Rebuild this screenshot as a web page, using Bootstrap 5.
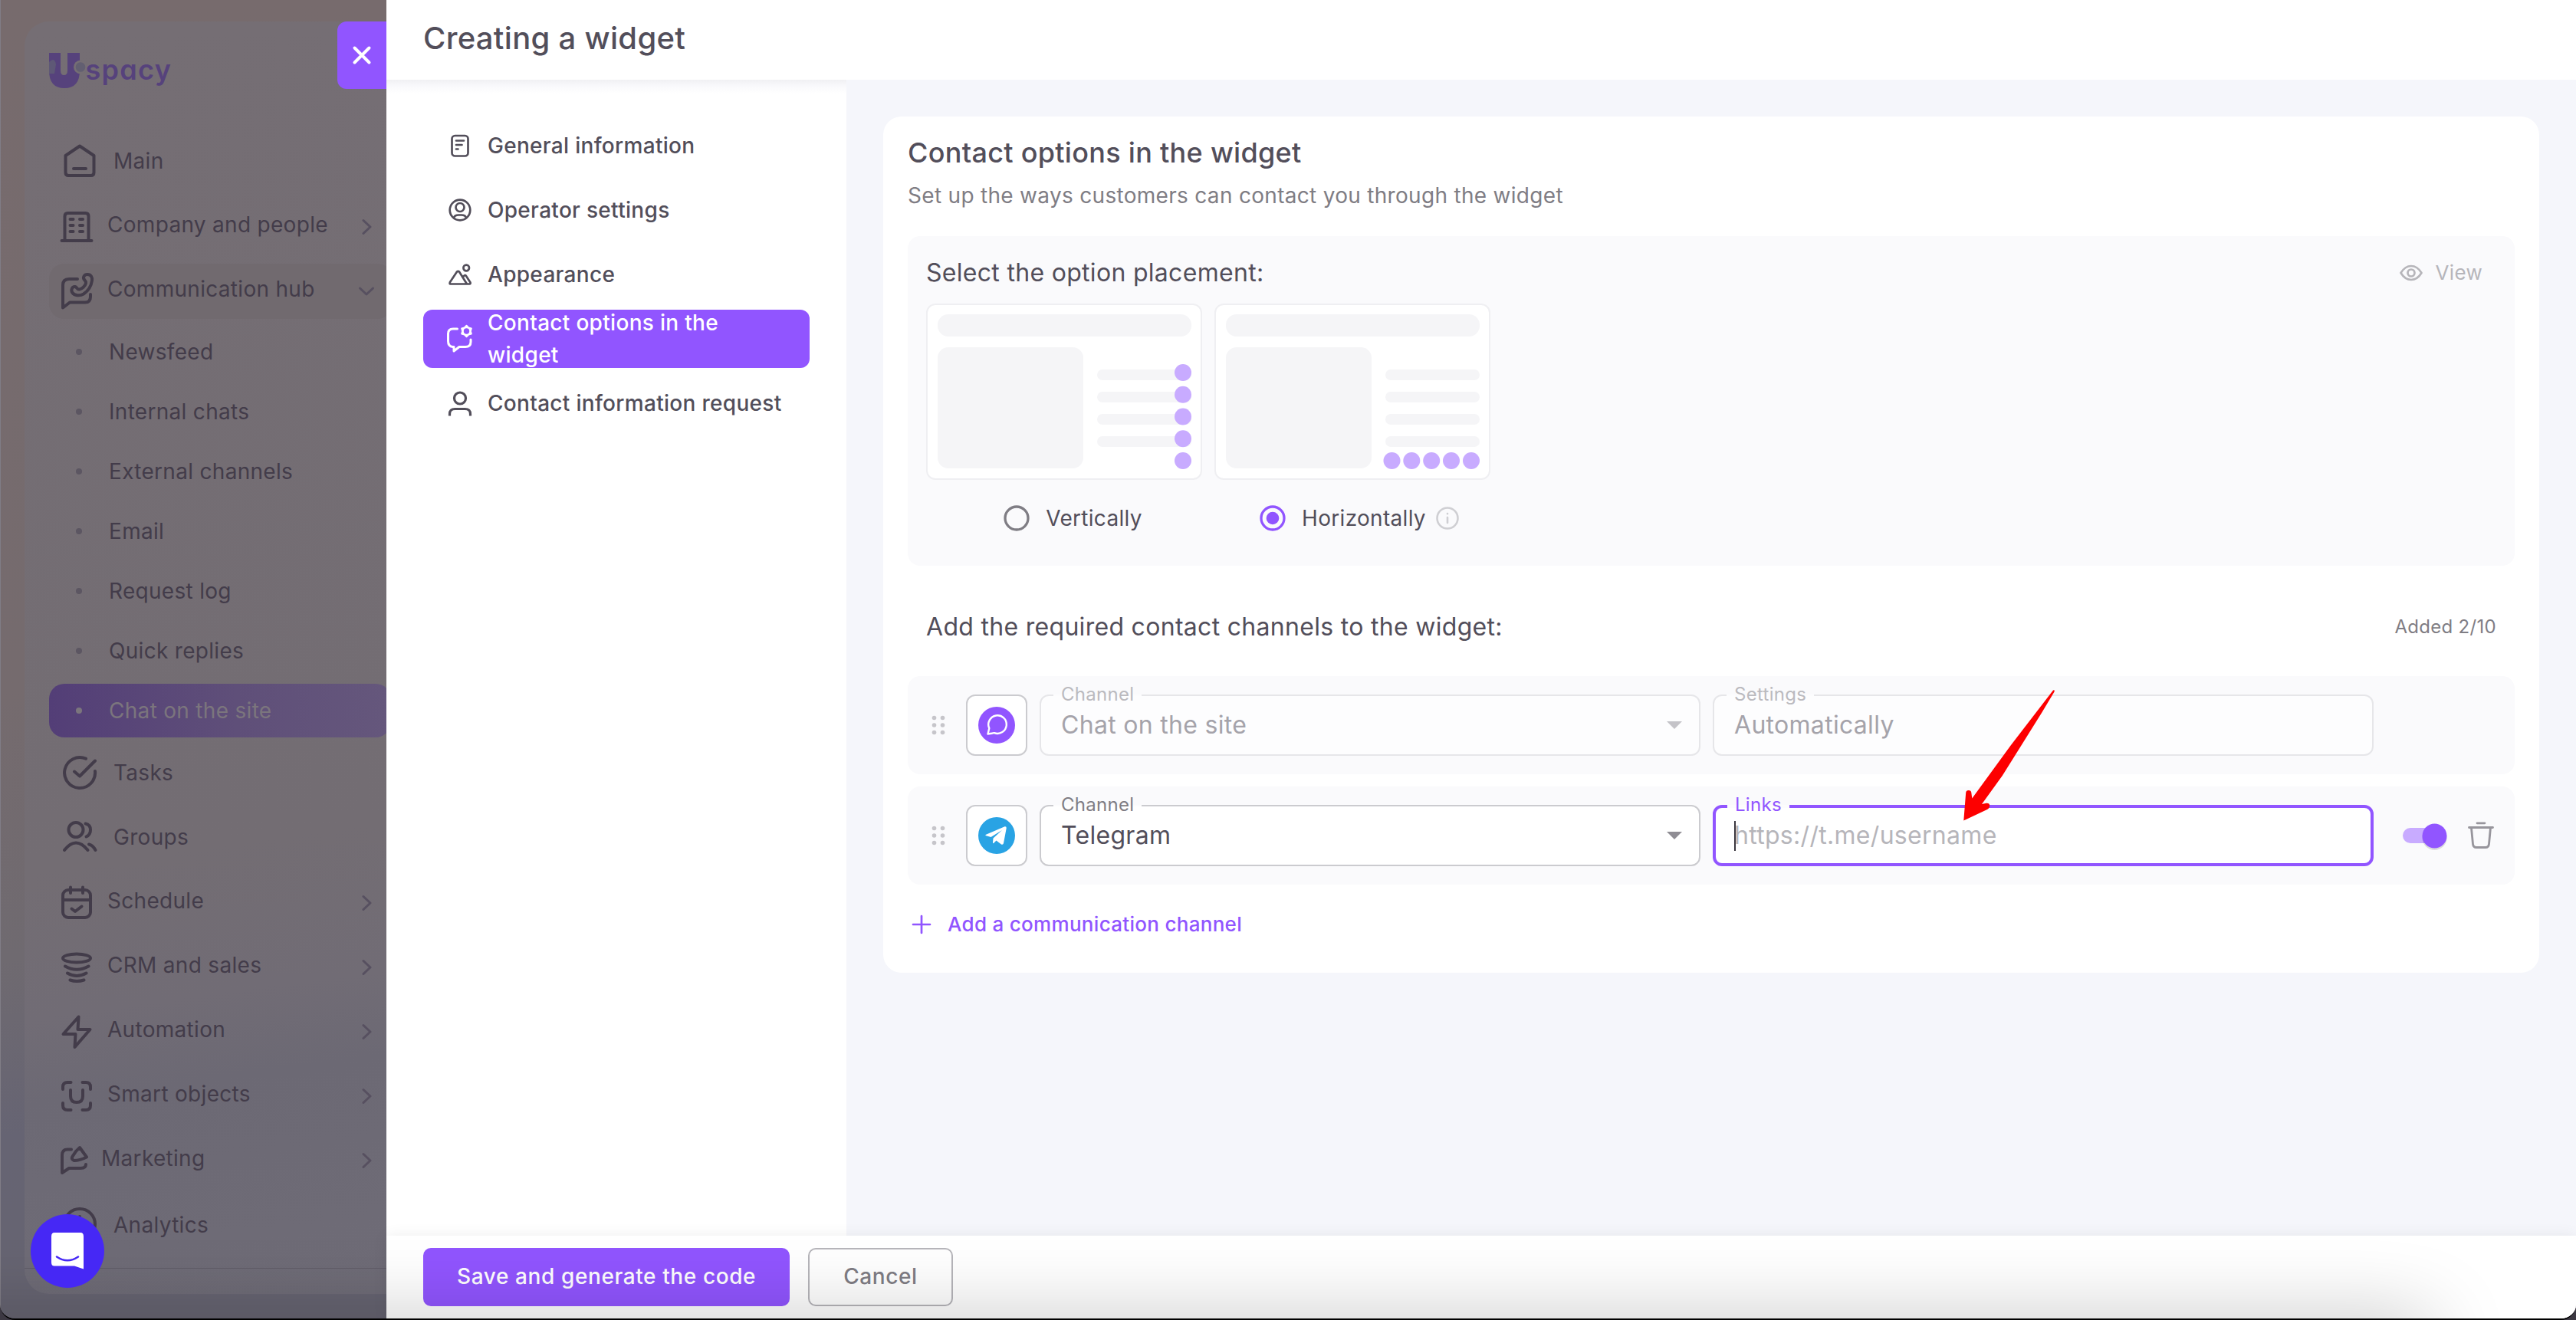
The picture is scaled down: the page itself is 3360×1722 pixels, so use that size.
<!DOCTYPE html>
<html lang="en">
<head>
  <meta charset="UTF-8" />
  <meta name="viewport" content="width=device-width, initial-scale=1" />
  <title>Creating a widget</title>
  <!-- Bootstrap CSS -->
  <link href="https://cdn.jsdelivr.net/npm/bootstrap@5.3.0/dist/css/bootstrap.min.css" rel="stylesheet" />
  <style>
    :root {
      --violet: #9155ff;
      --violet-soft: #c8abff;
      --ink: #524e5a;
      --ink-soft: #7f7d84;
      --ink-pale: #b6b5ba;
    }
    body {
      font-family: Inter, "Liberation Sans", sans-serif;
      font-size: 28px;
      line-height: 42px;
      letter-spacing: 0.3px;
      color: var(--ink);
      background: #3c3842;
    }
    svg { flex-shrink: 0; display: block; }
    .ico { fill: none; stroke: currentColor; stroke-width: 4; stroke-linecap: round; stroke-linejoin: round; }
    .ico-sm { stroke-width: 2.7; }
    .app {
      width: 3360px;
      height: 1722px;
      border-bottom: 2px solid #000;
      border-radius: 0 0 20px 20px;
    }

    /* Dimmed sidebar */
    .side {
      width: 504px;
      padding: 28px 0 32px 31px;
      border-left: 1px solid #807d86;
      background: linear-gradient(180deg, #776b6d 0, #756b6e 900px, #6f6a70 1250px, #666473 1480px, #666471 100%);
      color: #433c4a;
    }
    .side-panel {
      border-radius: 32px 0 0 32px;
      background: linear-gradient(172deg, #756e74 0, #736d73 1100px, #716c75 1290px, #6c6974 1400px, #6f6c77 100%);
    }
    .brand { height: 140px; padding: 36px 0 0 31px; }
    .side-item { height: 84px; padding-left: 48px; gap: 20px; }
    .side-item.has-sub { padding: 0 16px 0 44px; gap: 16px; }
    .side-item.has-sub svg { margin-top: 4px; }
    .side-item.has-sub span { margin-bottom: 2px; }
    .side-item.open { height: 72px; margin: 8px -8px 4px 32px; padding: 0 22px 0 12px; border-radius: 20px; background: #716a6f; }
    .side-item.open svg { margin-top: 0; }
    .side-item.open span { margin-bottom: 6px; }
    .arrow { color: #575060; }
    .sub-item { height: 78px; padding-left: 67px; gap: 35px; }
    .sub-item::before { content: ""; width: 8px; height: 8px; border-radius: 50%; background: #5c5662; }
    .sub-item.current {
      height: 70px;
      margin: 4px -6px 4px 32px;
      padding-left: 35px;
      border-radius: 20px;
      background: linear-gradient(90deg, #533e77, #5f4f79 55%, #65577c);
      color: #7b757d;
    }
    .sub-item.current::before { background: #7b757d; }
    .side-end { height: 50px; border-bottom: 1px solid #5f5b67; margin-bottom: 33px; margin-top: -33px; }
    .close-tab { left: 440px; top: 28px; width: 64px; height: 88px; border-radius: 12px 0 0 12px; background: var(--violet); }
    .messenger { left: 40px; top: 1584px; width: 96px; height: 96px; background: #4628f5; z-index: 5; }

    /* Drawer */
    .drawer-head { height: 104px; padding: 0 48px 4px; font-size: 40px; }
    .steps { width: 600px; padding: 48px; gap: 8px; background: linear-gradient(180deg, #f0f0f3 0, #f8f8fb 7px, #fff 18px); }
    .step { height: 76px; padding: 0 30px; gap: 18px; border-radius: 12px; }
    .step.active { background: var(--violet); color: #fff; }
    .work { padding: 48px; background: #f5f6fb; }
    .sheet { height: 1117px; border-radius: 24px; padding: 23px 32px 0; }
    .sheet-title { font-size: 36px; line-height: 48px; }
    .sheet-note { line-height: 40px; margin-top: 12px; color: var(--ink-soft); }
    .placement { height: 430px; margin-top: 33px; padding: 27px 24px 0; border-radius: 16px; background: #fafafc; }
    .label-lg { font-size: 32px; line-height: 40px; }
    .view-btn { font-size: 26px; margin-right: 18px; color: var(--ink-pale); }
    .previews { margin-top: 19px; }
    .preview { width: 360px; height: 230px; border: 2px solid #efeff2; border-radius: 12px; }
    .choice { margin-top: 29px; padding-left: 20px; gap: 18px; }
    .channels-head { height: 64px; margin: 48px 24px 32px; }
    .added { font-size: 24px; color: var(--ink-soft); }
    .channel { height: 128px; padding-right: 24px; gap: 16px; border-radius: 16px; background: #fafafc; }
    .channel + .channel { margin-top: 16px; }
    .logo-box { width: 80px; height: 80px; border: 2px solid #cbcbcf; border-radius: 12px; }
    .field { width: 862px; height: 80px; padding: 0 22px 0 26px; border: 2px solid #cbcbcf; border-radius: 12px; font-size: 32px; }
    .field-label {
      position: absolute;
      left: 16px;
      top: -2px;
      height: 2px;
      padding: 0 10px;
      font-size: 24px;
      line-height: 0;
      color: var(--ink-soft);
      background: #fcfcfd;
    }
    .field.off { border-color: #e6e6e9; background: #fdfdfe; color: #a5a3aa; }
    .field.off .field-label { color: #bbbabf; }
    .field.on { border: 4px solid var(--violet); padding: 0 24px; color: var(--ink-pale); }
    .field.on .field-label { left: 15px; top: -4px; height: 4px; color: var(--violet); }
    .caret { position: absolute; left: 24px; top: 17px; width: 2px; height: 39px; background: #3a3740; }
    .switch { width: 60px; height: 40px; margin-left: 20px; }
    .trash { margin-left: 8px; color: #97959c; }
    .add-channel { height: 103px; gap: 16px; font-size: 26px; color: var(--violet); }
    .pointer { left: 2555px; top: 894px; }
    .drawer-foot { height: 108px; padding: 16px 48px; gap: 24px; background: #fff; box-shadow: 0 0 18px rgba(0, 0, 0, 0.07); z-index: 1; }
    .action { height: 76px; border: 2px solid var(--violet); border-radius: 10px; padding: 14px 42px 16px; font-size: 28px; line-height: 42px; letter-spacing: 0.6px; font-weight: 500; }
    .action.save { background: var(--violet); color: #fff; }
    .action.cancel { border-color: #b6b5ba; padding: 14px 44px 16px; color: var(--ink-soft); }
    .bottom-shade { left: -100px; top: 1722px; width: 3272px; height: 60px; border-radius: 20px; box-shadow: 0 0 100px rgba(0, 0, 0, 0.27); z-index: 3; }
  </style>
</head>
<body class="overflow-hidden">

<div class="app position-relative d-flex overflow-hidden">

  <!-- Sidebar -->
  <aside class="side flex-shrink-0">
    <div class="side-panel h-100 overflow-hidden">
      <div class="brand">
        <svg width="170" height="60" viewBox="0 0 170 60">
          <path d="M1 5H16V28Q16 34 20.500 34Q25 34 25 28V5H41V28Q41 51 21 51Q1 51 1 28Z" fill="#56427c"/>
          <path d="M1 17Q8 10 10 20L8 32H1Z" fill="#5e5876"/>
          <circle cx="42" cy="23.500" r="9" fill="#756e74"/>
          <circle cx="42" cy="23.500" r="6.300" fill="#625f71"/>
          <text x="48.500" y="39.500" font-size="36" font-weight="600" letter-spacing="1.300" fill="#56427c" style="font-feature-settings: 'cv11'">spacy</text>
        </svg>
      </div>
      <div class="side-item d-flex align-items-center">
        <svg class="ico" width="48" height="48"><path d="M24 4.500L42.500 17V39q0 4-4 4h-29q-4 0-4-4V17ZM16 34H32"/></svg>
        <span>Main</span>
      </div>
      <div class="side-item has-sub d-flex align-items-center">
        <svg class="ico" width="48" height="48"><path d="M8.500 42V10q0-4 4-4h23q4 0 4 4V42M4.500 42h39M15.500 14h4M28 14h4M15.500 22h4M28 22h4M15.500 30h4M28 30h4"/></svg>
        <span class="flex-grow-1">Company and people</span>
        <svg class="ico arrow" width="16" height="24"><path stroke-width="3" d="M2 3.500L11 12L2 20.500"/></svg>
      </div>
      <div class="side-item has-sub open d-flex align-items-center">
        <svg class="ico" width="48" height="48"><path d="M25 8H14Q6 8 6 16V45.500L15 38.500H35Q42 38.500 42 31V28M34.500 9.500C31 6 34 2 38 2C43 2 44.500 6 44 10C43 17 39 23.500 33 27.500C28 30.500 21 29.500 18.500 26C16 22.500 18 17.500 22 18C24.500 18.500 24 22 27.500 21.500C31 21 35 17.500 36 13.500C36.300 11.500 35.800 10.800 34.500 9.500Z"/></svg>
        <span class="flex-grow-1">Communication hub</span>
        <svg class="ico arrow" width="24" height="16"><path stroke-width="3" d="M3.500 4L12 12L20.500 4"/></svg>
      </div>
      <div class="sub-item d-flex align-items-center">Newsfeed</div>
      <div class="sub-item d-flex align-items-center">Internal chats</div>
      <div class="sub-item d-flex align-items-center">External channels</div>
      <div class="sub-item d-flex align-items-center">Email</div>
      <div class="sub-item d-flex align-items-center">Request log</div>
      <div class="sub-item d-flex align-items-center">Quick replies</div>
      <div class="sub-item current d-flex align-items-center">Chat on the site</div>
      <div class="side-item d-flex align-items-center">
        <svg class="ico" width="48" height="48"><path d="M32 5.700A20 20 0 1 0 44 22M17 22.500L24 28.500L44 8.500"/></svg>
        <span>Tasks</span>
      </div>
      <div class="side-item d-flex align-items-center">
        <svg class="ico" width="48" height="48"><circle cx="19" cy="14.500" r="9.500"/><path d="M4 41Q19 22 34.500 41M31.500 6.500Q38 8 38 14.500T32.500 23.500M36 33.500Q41 34.500 44.500 41"/></svg>
        <span>Groups</span>
      </div>
      <div class="side-item has-sub d-flex align-items-center">
        <svg class="ico" width="48" height="48"><rect x="6" y="7" width="36" height="36" rx="7"/><path d="M16 3.500V11M32 3.500V11M6 20H42M17.500 31.500L22 35L30.500 28.500"/></svg>
        <span class="flex-grow-1">Schedule</span>
        <svg class="ico arrow" width="16" height="24"><path stroke-width="3" d="M2 3.500L11 12L2 20.500"/></svg>
      </div>
      <div class="side-item has-sub d-flex align-items-center">
        <svg class="ico" width="48" height="48"><ellipse cx="24" cy="12" rx="18" ry="5.500"/><path d="M9 22.500Q24 31 39.500 22.500M12 31.500Q24 38.500 36.500 31.500M15.500 40.500Q24 43.500 33.500 40.500"/></svg>
        <span class="flex-grow-1">CRM and sales</span>
        <svg class="ico arrow" width="16" height="24"><path stroke-width="3" d="M2 3.500L11 12L2 20.500"/></svg>
      </div>
      <div class="side-item has-sub d-flex align-items-center">
        <svg class="ico" width="48" height="48"><path d="M26.500 4.500L6.500 27H22.500L21.500 44L41.500 21H25.500Z"/></svg>
        <span class="flex-grow-1">Automation</span>
        <svg class="ico arrow" width="16" height="24"><path stroke-width="3" d="M2 3.500L11 12L2 20.500"/></svg>
      </div>
      <div class="side-item has-sub d-flex align-items-center">
        <svg class="ico" width="48" height="48"><path d="M6 15V12Q6 6 12 6H16.500M31.500 6H36Q42 6 42 12V15M42 33V36Q42 42 36 42H31.500M16.500 42H12Q6 42 6 36V33M16 16V24Q16 32 24 32T32 24V16"/></svg>
        <span class="flex-grow-1">Smart objects</span>
        <svg class="ico arrow" width="16" height="24"><path stroke-width="3" d="M2 3.500L11 12L2 20.500"/></svg>
      </div>
      <div class="side-item has-sub d-flex align-items-center">
        <svg class="ico" width="40" height="48"><path d="M17 9.500H12Q5 9.500 5 17V40L14 34H29Q36 34 36 29M28 7L37 19.500Q28 24 20.500 24Q16 22 19 18Q23 11 28 7Z"/></svg>
        <span class="flex-grow-1">Marketing</span>
        <svg class="ico arrow" width="16" height="24"><path stroke-width="3" d="M2 3.500L11 12L2 20.500"/></svg>
      </div>
      <div class="side-item d-flex align-items-center">
        <svg class="ico" width="48" height="48"><circle cx="24" cy="25" r="20"/><path d="M24 15V25"/></svg>
        <span class="mt-1">Analytics</span>
      </div>
      <div class="side-end"></div>
    </div>
  </aside>

  <!-- Drawer -->
  <section class="d-flex flex-column flex-grow-1 bg-white">
    <header class="drawer-head d-flex align-items-center fw-medium">Creating a widget</header>

    <div class="d-flex flex-grow-1">
      <nav class="steps d-flex flex-column flex-shrink-0 fw-medium">
        <div class="step d-flex align-items-center">
          <svg class="ico ico-sm" width="36" height="36"><rect x="7.500" y="5" width="21" height="26.500" rx="4"/><path d="M13 11.500h10M13 17h7.500M13 22.500h2.500"/></svg>
          <span>General information</span>
        </div>
        <div class="step d-flex align-items-center">
          <svg class="ico ico-sm" width="36" height="36"><circle cx="18" cy="18" r="13.300"/><circle cx="18" cy="14.500" r="5.500"/><path d="M10 28Q11 24.500 16 24.500H20Q25 24.500 26 28"/></svg>
          <span>Operator settings</span>
        </div>
        <div class="step d-flex align-items-center">
          <svg class="ico ico-sm" width="36" height="36"><circle cx="26.200" cy="9.500" r="3.800"/><path d="M5.500 30.500Q4 30.500 5 28L14 14.500Q15.500 13 17 14.500L27 30.500ZM21.500 22L23.500 19.500Q25 18.500 26 20L31.500 28.500Q32 30.500 30.500 30.500H26"/></svg>
          <span>Appearance</span>
        </div>
        <div class="step active d-flex align-items-center">
          <svg class="ico ico-sm overflow-visible" width="36" height="36"><path stroke-width="3" d="M14.500 5H9Q2.500 5 2.500 11.500V21Q2.500 28 8.500 28.500H10V34L17 28.500H25Q32 28.500 32 22V19"/><path stroke-width="2" fill="#fff" d="M26.500 .8L29.200 3.400L32.800 4.400L31.800 8L32.800 11.600L29.200 12.600L26.500 15.200L23.800 12.600L20.200 11.600L21.200 8L20.200 4.400L23.800 3.400Z"/><circle cx="26.500" cy="8" r="3.700" fill="#9155ff" stroke="none"/></svg>
          <span>Contact options in the widget</span>
        </div>
        <div class="step d-flex align-items-center">
          <svg class="ico" width="36" height="36"><g stroke-width="3.200" stroke-linecap="butt"><circle cx="18" cy="11.500" r="7.500"/><path d="M4.500 34.500V32Q4.500 25.500 11.500 25.500H24.500Q31.500 25.500 31.500 32V34.500"/></g></svg>
          <span class="text-nowrap">Contact information request</span>
        </div>
      </nav>

      <main class="work flex-grow-1">
        <div class="sheet bg-white">
          <div class="sheet-title fw-medium">Contact options in the widget</div>
          <div class="sheet-note">Set up the ways customers can contact you through the widget</div>

          <div class="placement">
            <div class="d-flex justify-content-between align-items-center">
              <div class="label-lg">Select the option placement:</div>
              <div class="view-btn d-flex align-items-center gap-3">
                <svg class="ico" width="32" height="32"><g stroke-width="2.700"><path d="M2.500 16Q8 7 16 7T29.500 16Q24 25 16 25T2.500 16Z"/><circle cx="16" cy="16" r="4.500"/></g></svg>
                <span>View</span>
              </div>
            </div>
            <div class="previews d-flex gap-3">
              <div>
                <div class="preview bg-white">
                  <svg width="356" height="226">
                    <g fill="#f5f5f7"><rect x="13" y="12" width="331" height="29" rx="14"/><rect x="13" y="55" width="190" height="158" rx="14"/><rect x="221" y="84" width="123" height="14" rx="7"/><rect x="221" y="113" width="123" height="14" rx="7"/><rect x="221" y="142" width="123" height="14" rx="7"/><rect x="221" y="171" width="123" height="14" rx="7"/></g>
                    <g fill="#c8abff"><circle cx="333" cy="88" r="11"/><circle cx="333" cy="116.700" r="11"/><circle cx="333" cy="145.500" r="11"/><circle cx="333" cy="174.200" r="11"/><circle cx="333" cy="203" r="11"/></g>
                  </svg>
                </div>
                <div class="choice d-flex align-items-center justify-content-center">
                  <svg width="40" height="42"><circle cx="20" cy="21" r="15" fill="none" stroke="#7f7d84" stroke-width="3.300"/></svg>
                  <span>Vertically</span>
                </div>
              </div>
              <div>
                <div class="preview bg-white">
                  <svg width="356" height="226">
                    <g fill="#f5f5f7"><rect x="13" y="12" width="331" height="29" rx="14"/><rect x="13" y="55" width="190" height="158" rx="14"/><rect x="221" y="84" width="123" height="14" rx="7"/><rect x="221" y="113" width="123" height="14" rx="7"/><rect x="221" y="142" width="123" height="14" rx="7"/><rect x="221" y="171" width="123" height="14" rx="7"/></g>
                    <g fill="#c8abff"><circle cx="229.500" cy="203" r="11"/><circle cx="255.300" cy="203" r="11"/><circle cx="281.200" cy="203" r="11"/><circle cx="307" cy="203" r="11"/><circle cx="333" cy="203" r="11"/></g>
                  </svg>
                </div>
                <div class="choice d-flex align-items-center justify-content-center">
                  <svg width="40" height="42"><circle cx="20" cy="21" r="15" fill="none" stroke="#9155ff" stroke-width="3.300"/><circle cx="20" cy="21" r="8.300" fill="#9155ff"/></svg>
                  <span class="d-flex align-items-center gap-2">
                    Horizontally
                    <svg class="ico" width="40" height="42"><g stroke="#cfcfd3" stroke-width="2.600"><circle cx="20" cy="21" r="13.500"/><path d="M20 20V27M20 15V15.200"/></g></svg>
                  </span>
                </div>
              </div>
            </div>
          </div>

          <div class="channels-head d-flex justify-content-between align-items-center">
            <div class="label-lg">Add the required contact channels to the widget:</div>
            <div class="added">Added 2/10</div>
          </div>

          <div class="channel d-flex align-items-center">
            <svg width="60" height="32" fill="#c6c5ca"><circle cx="34.500" cy="6.500" r="2.800"/><circle cx="45.500" cy="6.500" r="2.800"/><circle cx="34.500" cy="16" r="2.800"/><circle cx="45.500" cy="16" r="2.800"/><circle cx="34.500" cy="25.500" r="2.800"/><circle cx="45.500" cy="25.500" r="2.800"/></svg>
            <div class="logo-box bg-white d-flex align-items-center justify-content-center">
              <svg width="48" height="48"><circle cx="24" cy="24" r="24" fill="#9155ff"/><path d="M12.500 35.500L14.300 28A11.800 11.800 0 1 1 21 34.200Q19.500 34 17.500 34.800Z" fill="none" stroke="#fff" stroke-width="2.400" stroke-linejoin="round"/></svg>
            </div>
            <div class="field off position-relative d-flex align-items-center justify-content-between">
              <span class="field-label">Channel</span>
              <span>Chat on the site</span>
              <svg width="20" height="10"><path d="M0 0H20L10 10Z" fill="#c4c3c8"/></svg>
            </div>
            <div class="field off position-relative d-flex align-items-center">
              <span class="field-label">Settings</span>
              <span>Automatically</span>
            </div>
          </div>

          <div class="channel d-flex align-items-center">
            <svg width="60" height="32" fill="#c6c5ca"><circle cx="34.500" cy="6.500" r="2.800"/><circle cx="45.500" cy="6.500" r="2.800"/><circle cx="34.500" cy="16" r="2.800"/><circle cx="45.500" cy="16" r="2.800"/><circle cx="34.500" cy="25.500" r="2.800"/><circle cx="45.500" cy="25.500" r="2.800"/></svg>
            <div class="logo-box bg-white d-flex align-items-center justify-content-center">
              <svg width="48" height="48"><circle cx="24" cy="24" r="24" fill="#29a3e4"/><path d="M9.500 23L34.500 12.300Q37 11.800 36.700 14.500L33 34Q32.500 36.500 30 35.500L23.500 30.500L20 34Q19 34.500 19 33L19.500 27.500L31 17L16.500 26L9.500 24Z" fill="#fff"/></svg>
            </div>
            <div class="field bg-white position-relative d-flex align-items-center justify-content-between">
              <span class="field-label">Channel</span>
              <span>Telegram</span>
              <svg width="20" height="10"><path d="M0 0H20L10 10Z" fill="#8f8d94"/></svg>
            </div>
            <div class="field on bg-white position-relative d-flex align-items-center">
              <span class="field-label">Links</span>
              <span>https://t.me/username</span>
              <span class="caret"></span>
            </div>
            <svg class="switch" viewBox="0 0 60 40"><rect x="2" y="10" width="50" height="20" rx="10" fill="#c8abff"/><circle cx="43.500" cy="23" r="16" fill="#000" opacity=".12"/><circle cx="43.500" cy="20.500" r="16" fill="#9155ff"/></svg>
            <svg class="ico trash" width="40" height="40"><g stroke-width="2.800"><path d="M4.500 9.500H35.500M15 3.800H25M7.500 10L9.500 31Q10 35.500 14 35.500H26Q30 35.500 30.500 31L32.500 10"/></g></svg>
          </div>

          <div class="add-channel d-flex align-items-center fw-medium">
            <svg class="ico" width="36" height="36"><path stroke-width="2.700" d="M18 7V29M7 18H29"/></svg>
            <span>Add a communication channel</span>
          </div>
        </div>
      </main>
    </div>

    <footer class="drawer-foot d-flex">
      <button type="button" class="action save">Save and generate the code</button>
      <button type="button" class="action cancel bg-transparent">Cancel</button>
    </footer>
  </section>

  <!-- Things floating over the page -->
  <div class="close-tab position-absolute d-flex align-items-center justify-content-center text-white">
    <svg class="ico" width="32" height="32"><path d="M6.500 6.500L25.500 25.500M25.500 6.500L6.500 25.500"/></svg>
  </div>
  <svg class="pointer position-absolute" width="140" height="190"><path d="M123 6.500Q125.500 5.500 124.500 8.500L108 36L78 84L56.700 118L30 155L36 153.800Q41 153.500 40 158.500Q39.500 160.500 37 162L6.300 176.500L9.200 140Q9.500 137 12.700 137Q16 137 16.300 140L17.300 147.500L68 78L98 39Z" fill="#fd0000"/></svg>
  <div class="messenger position-absolute rounded-circle d-flex align-items-center justify-content-center">
    <svg width="44" height="48"><path d="M5 0H39Q43 0 43 5V47.500L31 43.500H5Q1 43.500 1 39V5Q1 0 5 0Z" fill="#fff"/><path d="M8 31.500Q22 41 36 31.500" fill="none" stroke="#4628f5" stroke-width="2.600" stroke-linecap="round"/></svg>
  </div>
  <div class="bottom-shade position-absolute"></div>
</div>

<!-- Bootstrap JS Bundle -->
<script src="https://cdn.jsdelivr.net/npm/bootstrap@5.3.0/dist/js/bootstrap.bundle.min.js"></script>

</body>
</html>
